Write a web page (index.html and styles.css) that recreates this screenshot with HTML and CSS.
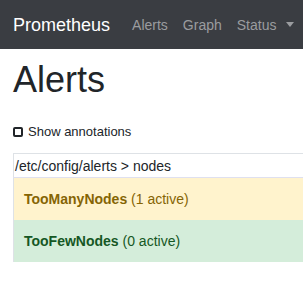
FILE: index.html
```html
<!DOCTYPE html>
<html>
<head>
<meta charset="utf-8">
<link rel="stylesheet" href="styles.css">
</head>
<body>
<nav class="navbar">
  <a class="brand" href="#">Prometheus</a>
  <ul class="nav">
    <li><a href="#">Alerts</a></li>
    <li><a href="#">Graph</a></li>
    <li><a href="#" class="dropdown">Status <span class="caret"></span></a></li>
  </ul>
</nav>
<main class="page">
  <h1 class="title">Alerts</h1>
  <label class="toggle"><input type="checkbox" class="check"> Show annotations</label>
  <table class="rules">
    <tr><td class="path">/etc/config/alerts &gt; nodes</td></tr>
    <tr class="warning"><td><b>TooManyNodes</b> (1 active)</td></tr>
    <tr class="success"><td><b>TooFewNodes</b> (0 active)</td></tr>
  </table>
</main>
</body>
</html>
```

FILE: styles.css
```css
html, body {
  margin: 0;
  padding: 0;
}
body {
  font-family: "Liberation Sans", Arial, sans-serif;
  font-size: 14px;
  line-height: 20px;
  color: #212529;
  background: #fff;
}
.navbar {
  display: flex;
  align-items: center;
  height: 49px;
  padding: 0 0 0 13px;
  background: #3a3d42;
  white-space: nowrap;
}
.brand {
  flex-shrink: 0;
  font-size: 18px;
  color: #fff;
  text-decoration: none;
  margin-right: 22px;
  margin-top: 1px;
}
.nav {
  flex-shrink: 0;
  display: flex;
  gap: 15px;
  list-style: none;
  margin: 0;
  padding: 0;
}
.nav a {
  color: #9a9c9f;
  text-decoration: none;
}
.caret {
  display: inline-block;
  width: 0;
  height: 0;
  margin-left: 6px;
  vertical-align: 3px;
  border-top: 5px solid #9a9c9f;
  border-left: 4px solid transparent;
  border-right: 4px solid transparent;
}
.page {
  padding: 0 0 0 13px;
}
.title {
  font-size: 36px;
  font-weight: 400;
  line-height: 40px;
  margin: 11px 0 22px;
}
.toggle {
  display: flex;
  align-items: center;
  font-size: 13px;
  gap: 4px;
}
.check {
  appearance: none;
  -webkit-appearance: none;
  width: 10px;
  height: 10px;
  margin: 0 1px 0 0;
  border: 2px solid #212529;
  border-radius: 2px;
}
.rules {
  width: 100%;
  margin-top: 11px;
  border-collapse: collapse;
  border-top: 1px solid #dee2e6;
  border-left: 1px solid #dee2e6;
}
.rules td {
  padding: 11px 10px;
  line-height: 20px;
}
.rules .path {
  padding: 2px 0 1px 1px;
}
.warning td {
  background: #fff3cd;
  color: #856404;
  border-top: 1px solid #dfe0ef;
}
.success td {
  background: #d4edda;
  color: #155724;
}
```
